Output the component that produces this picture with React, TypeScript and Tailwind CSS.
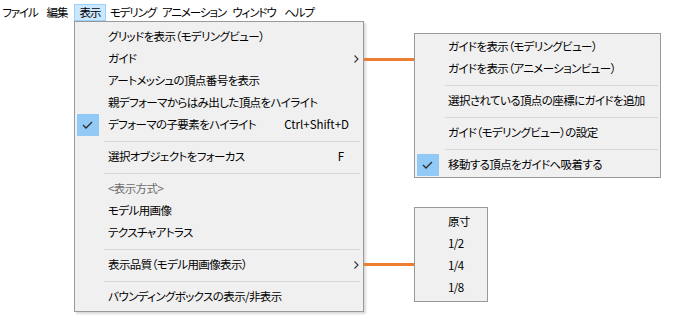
import React from 'react';

const font = { fontFamily: '"Noto Sans CJK JP", "Noto Sans", sans-serif', fontFeatureSettings: '"palt"' };

type Item =
  | { kind: 'sep' }
  | { kind: 'item'; label: string; checked?: boolean; shortcut?: string; sub?: boolean; disabled?: boolean };

const mainItems: Item[] = [
  { kind: 'item', label: 'グリッドを表示（モデリングビュー）' },
  { kind: 'item', label: 'ガイド', sub: true },
  { kind: 'item', label: 'アートメッシュの頂点番号を表示' },
  { kind: 'item', label: '親デフォーマからはみ出した頂点をハイライト' },
  { kind: 'item', label: 'デフォーマの子要素をハイライト', checked: true, shortcut: 'Ctrl+Shift+D' },
  { kind: 'sep' },
  { kind: 'item', label: '選択オブジェクトをフォーカス', shortcut: 'F' },
  { kind: 'sep' },
  { kind: 'item', label: '<表示方式>', disabled: true },
  { kind: 'item', label: 'モデル用画像' },
  { kind: 'item', label: 'テクスチャアトラス' },
  { kind: 'sep' },
  { kind: 'item', label: '表示品質（モデル用画像表示）', sub: true },
  { kind: 'sep' },
  { kind: 'item', label: 'バウンディングボックスの表示/非表示' },
];

const guideItems: Item[] = [
  { kind: 'item', label: 'ガイドを表示（モデリングビュー）' },
  { kind: 'item', label: 'ガイドを表示（アニメーションビュー）' },
  { kind: 'sep' },
  { kind: 'item', label: '選択されている頂点の座標にガイドを追加' },
  { kind: 'sep' },
  { kind: 'item', label: 'ガイド（モデリングビュー）の設定' },
  { kind: 'sep' },
  { kind: 'item', label: '移動する頂点をガイドへ吸着する', checked: true },
];

const qualityItems: Item[] = [
  { kind: 'item', label: '原寸' },
  { kind: 'item', label: '1/2' },
  { kind: 'item', label: '1/4' },
  { kind: 'item', label: '1/8' },
];

function Check() {
  return (
    <div className="flex h-[22px] w-[22px] items-center justify-center bg-[#91c9f7]">
      <svg width="22" height="22" viewBox="0 0 22 22">
        <path d="M6 11 L9 14 L15 8" fill="none" stroke="#2b2b2b" strokeWidth="1.3" />
      </svg>
    </div>
  );
}

function Menu({ items, sepInset }: { items: Item[]; sepInset: string }) {
  return (
    <div className="flex flex-col">
      {items.map((it, i) =>
        it.kind === 'sep' ? (
          <div key={i} className="flex h-[10px] items-center">
            <div className={`h-px flex-1 bg-[#d7d7d7] ${sepInset}`} />
          </div>
        ) : (
          <div key={i} className="flex h-[22px] items-center text-[11.5px] leading-none tracking-[-0.6px]">
            <div className="ml-[2px] h-[22px] w-[22px] shrink-0">{it.checked && <Check />}</div>
            <span className={`ml-[9px] flex-1 whitespace-nowrap ${it.disabled ? 'text-[#6d6d6d]' : 'text-black'}`}>
              {it.label}
            </span>
            {it.shortcut && (
              <span
                className={`whitespace-nowrap tracking-normal text-black ${it.shortcut === 'F' ? 'mr-[19px]' : 'mr-[14px]'}`}
              >
                {it.shortcut}
              </span>
            )}
            {it.sub && (
              <svg width="5" height="8" viewBox="0 0 5 8" className="mr-[4px]">
                <path d="M0.5 0.5 L4 4 L0.5 7.5" fill="none" stroke="#333" strokeWidth="1.1" />
              </svg>
            )}
          </div>
        )
      )}
    </div>
  );
}

const bar: [string, string][] = [
  ['ファイル', 'w-[40px]'],
  ['編集', 'w-[34px]'],
  ['表示', 'w-[32px]'],
  ['モデリング', 'w-[54px]'],
  ['アニメーション', 'w-[68px]'],
  ['ウィンドウ', 'w-[52px]'],
  ['ヘルプ', 'w-[38px]'],
];

export default function App() {
  return (
    <div className="relative h-[323px] w-[683px] overflow-hidden bg-white" style={font}>
      <div className="flex h-[21px] items-end text-[11.5px] tracking-[-1.1px]">
        {bar.map(([b, w]) => (
          <div
            key={b}
            className={`flex h-[17px] shrink-0 items-center justify-center whitespace-nowrap ${w} ${
              b === '表示' ? 'border border-[#99d1ff] bg-[#cce8ff]' : 'border border-transparent'
            }`}
          >
            {b}
          </div>
        ))}
      </div>

      {/* main dropdown */}
      <div className="absolute left-[74px] top-[21px] w-[290px] border border-[#999] bg-[#f0f0f0] pt-[4px] pb-[3px] shadow-[2px_2px_2px_rgba(0,0,0,0.15)]">
        <Menu items={mainItems} sepInset="ml-[29px] mr-[3px]" />
      </div>

      {/* connector lines */}
      <div className="absolute left-[364px] top-[58px] h-[3px] w-[50px] bg-[#ed7d31]" />
      <div className="absolute left-[364px] top-[263px] h-[3px] w-[50px] bg-[#ed7d31]" />

      {/* guide submenu */}
      <div className="absolute left-[414px] top-[33px] w-[247px] border border-[#999] bg-[#f0f0f0] pt-[2px] pb-[1px]">
        <Menu items={guideItems} sepInset="ml-[30px] mr-[2px]" />
      </div>

      {/* quality submenu */}
      <div className="absolute left-[414px] top-[207px] w-[74px] border border-[#999] bg-[#f0f0f0] pt-[3px] pb-[2px]">
        <Menu items={qualityItems} sepInset="" />
      </div>
    </div>
  );
}
